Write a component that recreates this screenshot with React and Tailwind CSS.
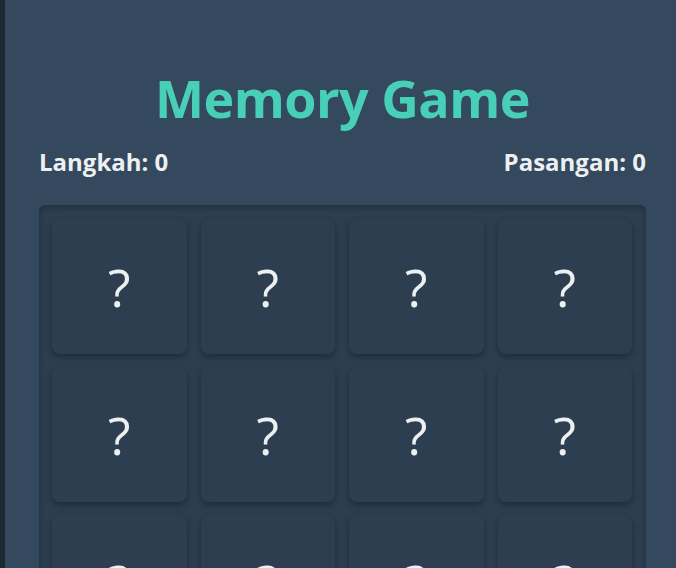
import React from "react";

export default function App() {
  const cards = Array.from({ length: 16 });
  return (
    <div className="flex h-[568px] w-[676px] overflow-hidden bg-[#34495e]" style={{ fontFamily: '"Open Sans", "Noto Sans", sans-serif' }}>
      <div className="w-[5px] shrink-0 bg-[#1c2833]" />
      <div className="flex flex-1 flex-col pl-[34px] pr-[30px] pt-[62px]">
        <h1 className="text-center text-[52px] font-bold leading-[72px] tracking-[-0.5px] text-[#48cfb8]">Memory Game</h1>
        <div className="mt-[12px] flex items-center justify-between text-[24px] font-bold leading-[32px] text-[#ecf0f1]">
          <span>Langkah: 0</span>
          <span>Pasangan: 0</span>
        </div>
        <div className="mt-[27px] rounded-[6px] bg-[#2c3e50] p-[14px] pl-[13px] shadow-[inset_0_2px_6px_rgba(0,0,0,0.25)]">
          <div className="grid grid-cols-4 gap-x-[14px] gap-y-[13px]">
            {cards.map((_, i) => (
              <div
                key={i}
                className="flex h-[135px] items-center justify-center rounded-[8px] bg-[#2e3e51] text-[52px] font-normal text-[#ecf0f1] shadow-[0_3px_6px_rgba(0,0,0,0.3)]"
              >
                ?
              </div>
            ))}
          </div>
        </div>
      </div>
    </div>
  );
}
